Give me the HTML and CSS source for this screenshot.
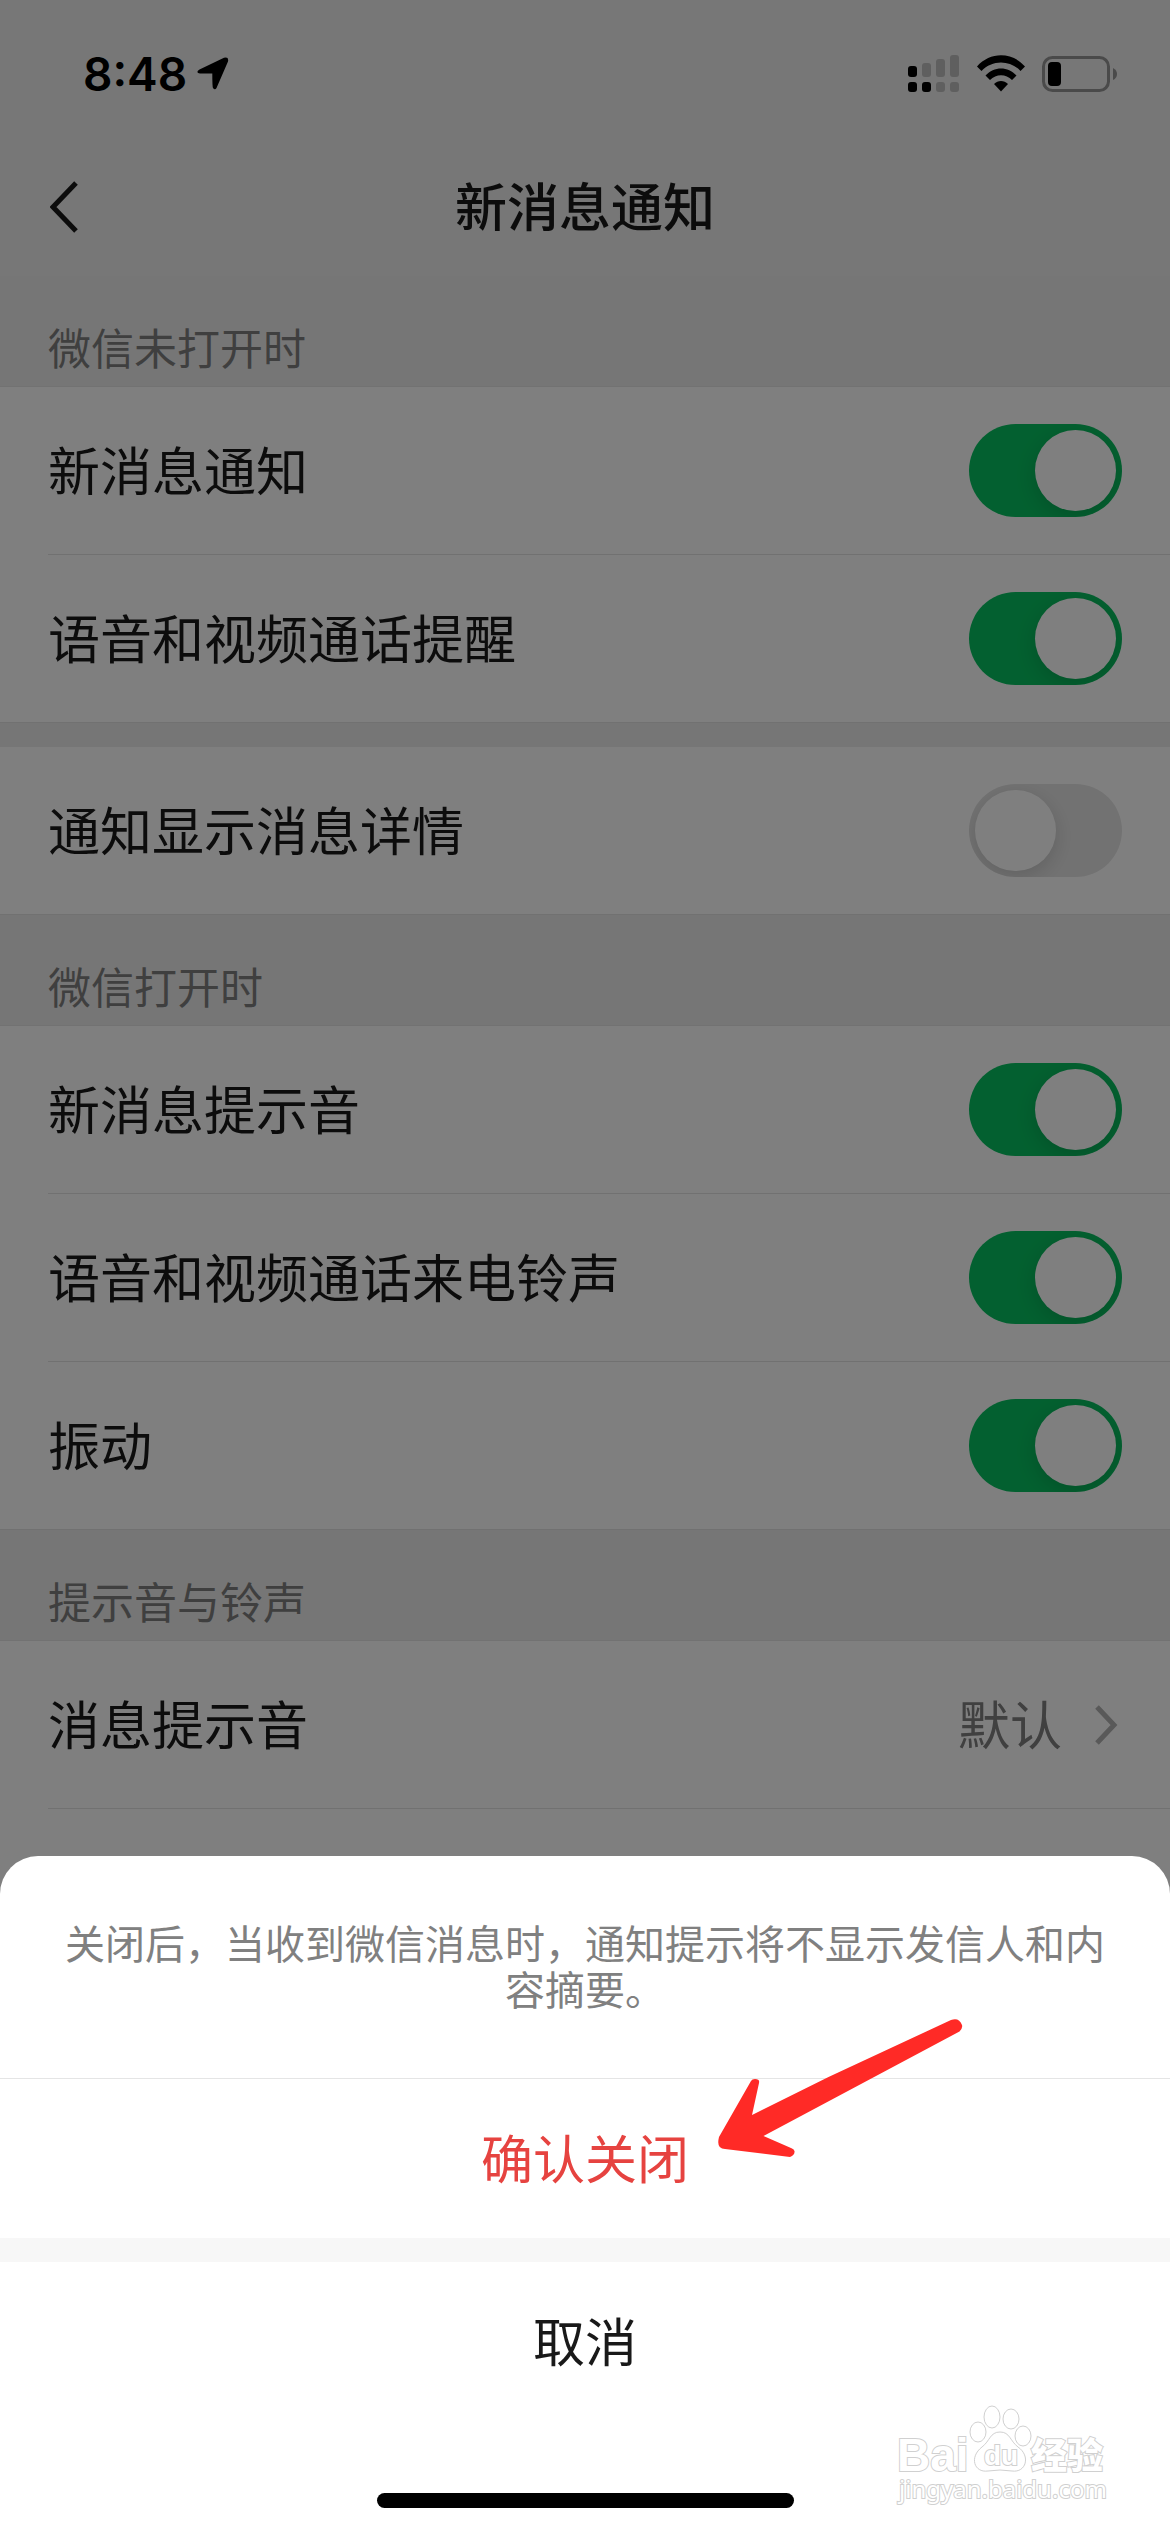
FILE: index.html
```html
<!DOCTYPE html>
<html lang="zh-CN">
<head>
	<meta charset="utf-8">
	<meta name="viewport" content="width=device-width, initial-scale=1">
	<title>新消息通知</title>
	<link rel="stylesheet" href="styles.css">
</head>
<body>
	<div class="page">
		<header class="header">
			<div class="status">
				<span class="time">8:48</span>
				<svg class="location" width="32" height="34" viewBox="0 0 32 34"><path d="M2.500 12.500 27 .8Q32-.5 31 4.500L19.500 31Q18 33.500 16 31Q15.300 30 15.300 16.500H3Q-2 15.500 2.500 12.500Z"/></svg>
				<div class="status-icons">
					<svg width="52" height="38" viewBox="0 0 52 38">
						<g fill="#bebebe"><rect x="14" y="8" width="9" height="14" rx="3"/><rect x="28" y="4" width="9" height="18" rx="3"/><rect x="42" y="0" width="9" height="22" rx="3"/><rect x="28" y="27" width="9" height="10" rx="3"/><rect x="42" y="27" width="9" height="10" rx="3"/></g>
						<rect x="0" y="11" width="9" height="11" rx="3"/><rect x="0" y="27" width="9" height="10" rx="3"/><rect x="14" y="27" width="9" height="10" rx="3"/>
					</svg>
					<svg width="50" height="38" viewBox="0 0 50 38">
						<path d="M1 11.500C14-3.500 36-3.500 49 11.500L44.500 16C34 4.500 16 4.500 5.500 16Z"/>
						<path d="M9.500 20.500C18 11 32 11 40.500 20.500L36 25C30 18.500 20 18.500 14 25Z"/>
						<path d="M18 29C22 25 28 25 32 29L25 36.500Z"/>
					</svg>
					<svg width="76" height="38" viewBox="0 0 76 38">
						<rect x="1.500" y="2.500" width="65" height="33" rx="9" fill="none" stroke="#949494" stroke-width="3"/>
						<rect x="6" y="7" width="13" height="24" rx="4"/>
						<path d="M71 13Q75 15 75 19T71 25Z" fill="#949494"/>
					</svg>
				</div>
			</div>
			<nav class="nav">
				<button class="back" type="button" aria-label="返回"><svg width="28" height="52" viewBox="0 0 28 52"><path d="M26 2 3 26 26 50"/></svg></button>
				<h1 class="title">新消息通知</h1>
			</nav>
		</header>

		<h2 class="heading">微信未打开时</h2>
		<div class="group">
			<label class="row"><span class="label">新消息通知</span><input class="switch" type="checkbox" checked></label>
			<label class="row"><span class="label">语音和视频通话提醒</span><input class="switch" type="checkbox" checked></label>
		</div>
		<div class="group spaced">
			<label class="row"><span class="label">通知显示消息详情</span><input class="switch" type="checkbox"></label>
		</div>

		<h2 class="heading">微信打开时</h2>
		<div class="group">
			<label class="row"><span class="label">新消息提示音</span><input class="switch" type="checkbox" checked></label>
			<label class="row"><span class="label">语音和视频通话来电铃声</span><input class="switch" type="checkbox" checked></label>
			<label class="row"><span class="label">振动</span><input class="switch" type="checkbox" checked></label>
		</div>

		<h2 class="heading">提示音与铃声</h2>
		<div class="group rest">
			<a class="row" href="#sound"><span class="label">消息提示音</span>
				<span class="value"><span class="label">默认</span><svg width="24" height="40" viewBox="0 0 24 40"><path d="M3 2 20 20 3 38"/></svg></span>
			</a>
		</div>
	</div>

	<div class="mask"></div>

	<div class="sheet" role="dialog" aria-label="确认关闭">
		<p class="message">关闭后，当收到微信消息时，通知提示将不显示发信人和内容摘要。</p>
		<button class="action confirm" type="button">确认关闭</button>
		<button class="action cancel" type="button">取消</button>
		<div class="home"></div>

		<svg class="arrow" width="250" height="146" viewBox="0 0 250 146">
			<path d="M235 4 112.500 61 36 99 43 67Q44 63 39 63Q36 63 35 65L3 121Q0 133 9 133L74 141Q79 139 78.500 135Q78 133 75 132L47.500 120 243.500 15.500Q247 12 246 9Q243 1 235 4Z"/>
		</svg>

		<svg class="watermark" width="212" height="112" viewBox="0 0 212 112">
			<text class="wm-latin" x="1" y="67">Bai</text>
			<path d="M104 28C114 28 114 37 122 43C135 52 130 69 116 67Q104 65 92 67C78 69 73 53 86 43C94 37 94 28 104 28Z"/>
			<ellipse cx="82" cy="28" rx="8" ry="10"/>
			<ellipse cx="96" cy="13" rx="8" ry="11"/>
			<ellipse cx="115" cy="15" rx="8" ry="10"/>
			<ellipse cx="127" cy="32" rx="8" ry="10"/>
			<text class="wm-du" x="88" y="61">du</text>
			<text class="wm-cjk" x="135" y="65">经验</text>
			<text class="wm-url" x="3" y="94">jingyan.baidu.com</text>
		</svg>
	</div>
</body>
</html>
```

FILE: styles.css
```css
*{box-sizing: border-box;}
body{
	margin: 0;
	background-color: #ededed;
	color: #191919;
	font-family: "Noto Sans CJK SC", sans-serif;
	font-size: 52px;
	line-height: 72px;
}
h1, h2, p{margin: 0; font-weight: 400;}
button{
	border: 0;
	padding: 0;
	background: none;
	color: inherit;
	font: inherit;
}
svg{display: block;}

.page{
	display: flex;
	flex-direction: column;
	min-height: 100vh;
}

/* status bar and title */
.header{background-color: #eeeeee;}
.status{
	display: flex;
	align-items: center;
	height: 138px;
	padding: 10px 52px 0 83px;
}
.time{
	color: black;
	font-family: Inter, sans-serif;
	font-size: 46px;
	font-weight: 600;
}
.location{margin-left: 10px;}
.status-icons{
	display: flex;
	gap: 16px;
	margin-left: auto;
}
.nav{
	display: grid;
	grid-template-columns: 96px 1fr 96px;
	align-items: center;
	height: 138px;
}
.back{padding-left: 50px;}
.back path{
	fill: none;
	stroke: #191919;
	stroke-width: 5px;
}
.title{
	padding-bottom: 4px;
	font-size: 52px;
	font-weight: 500;
	text-align: center;
}

/* settings */
.heading{
	height: 111px;
	padding: 46px 48px 0;
	border-bottom: 1px solid #e5e5e5;
	color: #7f7f7f;
	font-size: 43px;
	line-height: 48px;
}
.group{background-color: white;}
.spaced{
	border-top: 24px solid #ededed;
}
.rest{flex: 1;}
.row{
	display: flex;
	align-items: center;
	justify-content: space-between;
	height: 168px;
	margin-left: 48px;
	padding-right: 48px;
	border-bottom: 1px solid #e3e3e3;
	color: inherit;
	text-decoration: none;
}
.group:not(.rest) .row:last-child{
	margin-left: 0;
	padding-left: 48px;
}
.label{padding-bottom: 4px;}
.switch{
	appearance: none;
	width: 153px;
	height: 93px;
	margin: 0;
	padding: 6px;
	border-radius: 47px;
	background-color: #e5e5e5;
	overflow: hidden;
}
.switch::before{
	content: "";
	display: block;
	width: 81px;
	height: 81px;
	border-radius: 50%;
	background-color: white;
	box-shadow: 0 6px 20px rgba(0,0,0,.15);
}
.switch:checked{background-color: #07c160;}
.switch:checked::before{margin-left: auto;}
.value{
	display: flex;
	align-items: center;
	gap: 32px;
	padding-right: 4px;
	color: #808080;
}
.value path{
	fill: none;
	stroke: #b2b2b2;
	stroke-width: 5px;
}

/* bottom sheet */
.mask{
	position: fixed;
	inset: 0;
	background-color: rgba(0,0,0,.5);
}
.sheet{
	position: fixed;
	left: 0;
	right: 0;
	bottom: 0;
	border-radius: 38px 38px 0 0;
	background-color: white;
}
.message{
	padding: 63px 64px 67px;
	color: #808080;
	font-size: 40px;
	line-height: 46px;
	text-align: center;
}
.action{
	display: block;
	width: 100%;
	height: 160px;
	padding-bottom: 4px;
}
.confirm{
	border-top: 1px solid #e5e5e5;
	color: #e64340;
}
.cancel{
	height: 184px;
	border-top: 24px solid #f7f7f7;
}
.home{
	height: 110px;
	padding-top: 71px;
}
.home::before{
	content: "";
	display: block;
	width: 417px;
	height: 15px;
	margin: 0 auto;
	border-radius: 8px;
	background-color: black;
}
.arrow{
	position: absolute;
	top: 160px;
	left: calc(50% + 131px);
	fill: #ff2a26;
}
.watermark{
	position: absolute;
	right: 62px;
	bottom: 16px;
	overflow: visible;
	fill: white;
	stroke: #d0d0d0;
	stroke-width: 1px;
}
.watermark text{
	stroke-width: 2px;
	paint-order: stroke;
}
.wm-latin{font: 700 46px "Liberation Sans", sans-serif;}
.wm-du{font: 700 28px "Liberation Sans", sans-serif;}
.wm-cjk{font: 900 36px "Noto Sans CJK SC", sans-serif;}
.wm-url{font: 400 24px "Noto Sans", sans-serif;}
```
